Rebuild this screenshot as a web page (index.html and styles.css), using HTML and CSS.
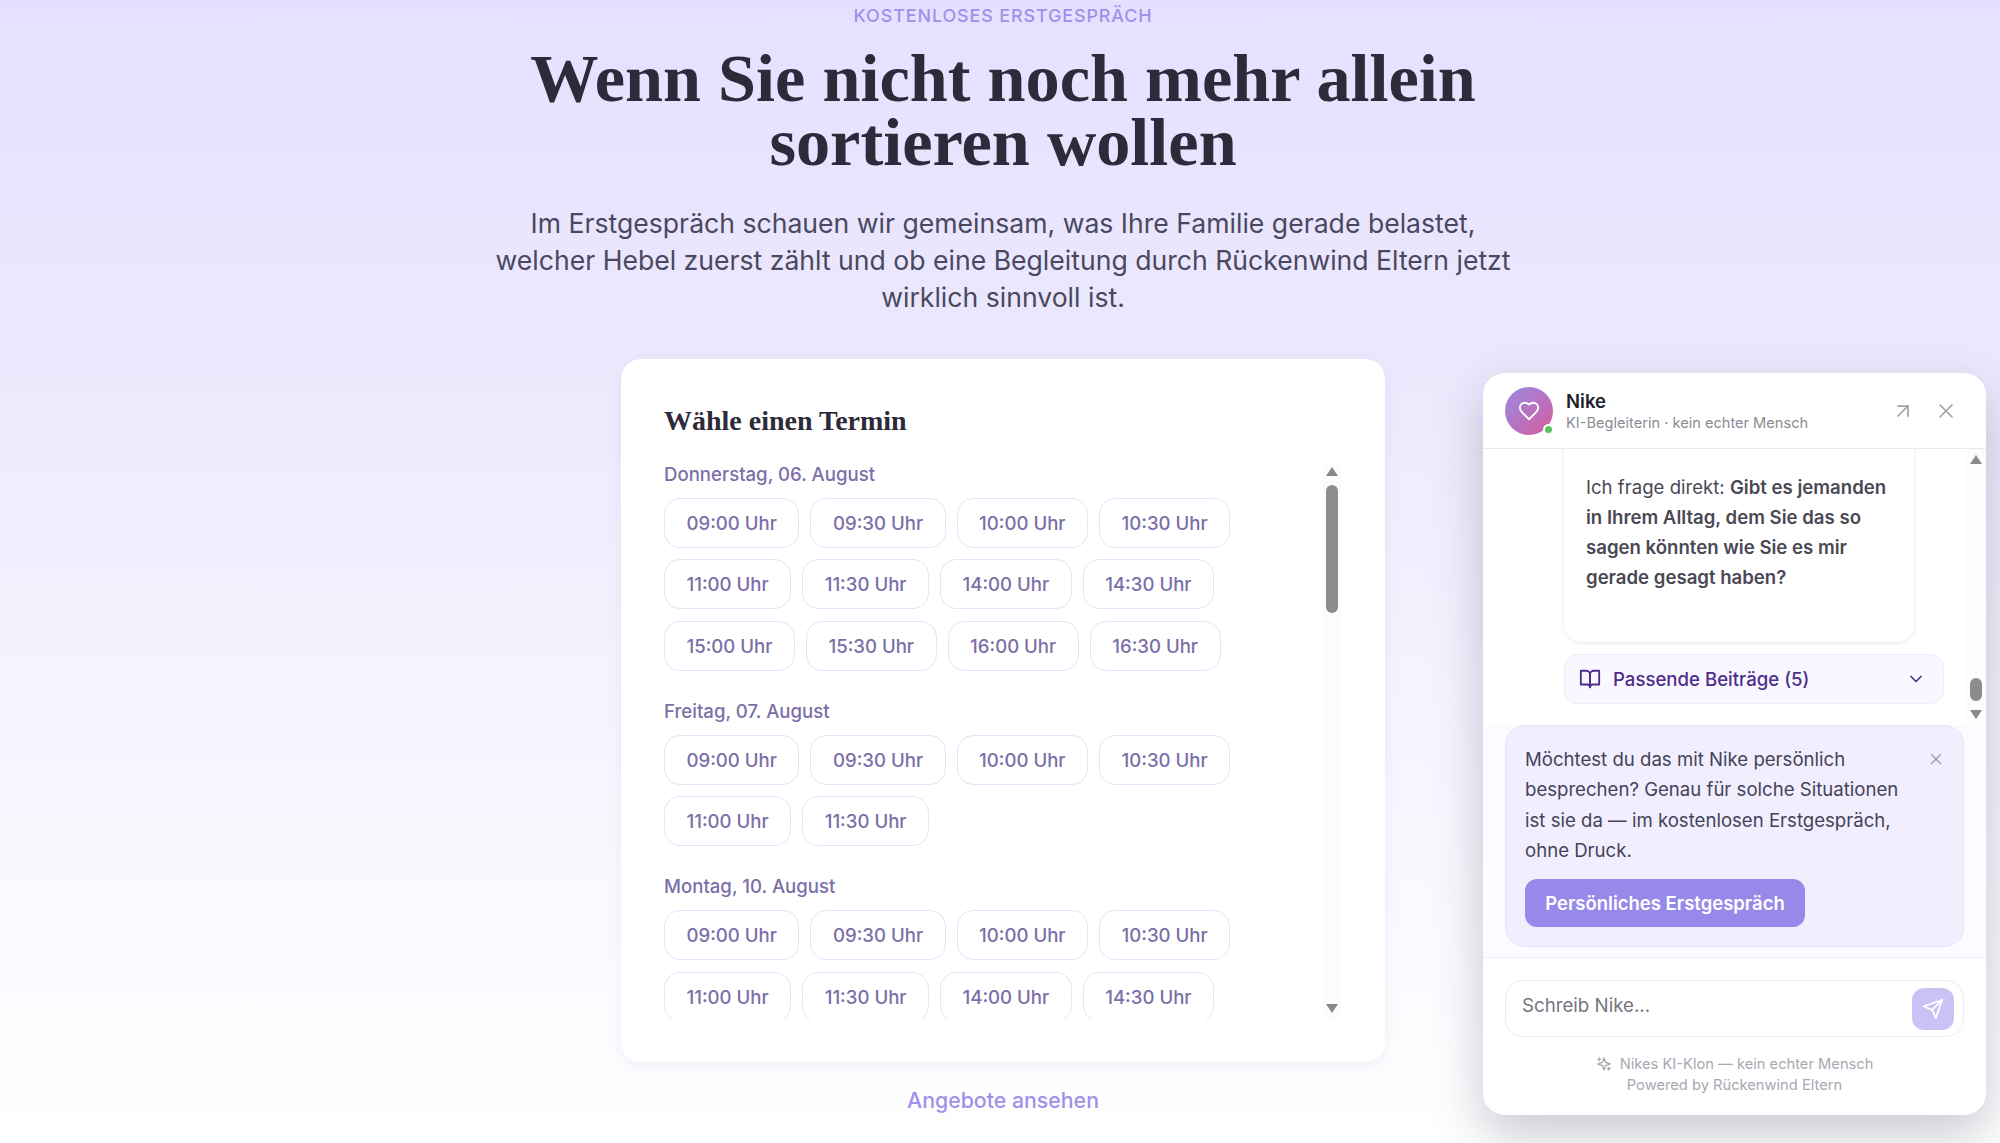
FILE: index.html
```html
<!DOCTYPE html>
<html lang="de">
<head>
  <meta charset="UTF-8" />
  <meta name="viewport" content="width=device-width, initial-scale=1.0"/>
  <title>Kostenloses Erstgespräch</title>
  <link rel="stylesheet" href="styles.css">
</head>
<body>

  <main class="page">
    <div class="eyebrow">Kostenloses Erstgespräch</div>
    <h1>Wenn Sie nicht noch mehr allein<br>sortieren wollen</h1>
    <p class="lead">Im Erstgespräch schauen wir gemeinsam, was Ihre Familie gerade belastet, welcher Hebel zuerst zählt und ob eine Begleitung durch Rückenwind Eltern jetzt wirklich sinnvoll ist.</p>

    <section class="card">
      <h2>Wähle einen Termin</h2>
      <div class="picker">
        <div class="days">
          <div class="day">
            <div class="day-label">Donnerstag, 06. August</div>
            <div class="slots">
              <button class="slot">09:00 Uhr</button>
              <button class="slot">09:30 Uhr</button>
              <button class="slot">10:00 Uhr</button>
              <button class="slot">10:30 Uhr</button>
              <button class="slot">11:00 Uhr</button>
              <button class="slot">11:30 Uhr</button>
              <button class="slot">14:00 Uhr</button>
              <button class="slot">14:30 Uhr</button>
              <button class="slot">15:00 Uhr</button>
              <button class="slot">15:30 Uhr</button>
              <button class="slot">16:00 Uhr</button>
              <button class="slot">16:30 Uhr</button>
            </div>
          </div>
          <div class="day">
            <div class="day-label">Freitag, 07. August</div>
            <div class="slots">
              <button class="slot">09:00 Uhr</button>
              <button class="slot">09:30 Uhr</button>
              <button class="slot">10:00 Uhr</button>
              <button class="slot">10:30 Uhr</button>
              <button class="slot">11:00 Uhr</button>
              <button class="slot">11:30 Uhr</button>
            </div>
          </div>
          <div class="day">
            <div class="day-label">Montag, 10. August</div>
            <div class="slots">
              <button class="slot">09:00 Uhr</button>
              <button class="slot">09:30 Uhr</button>
              <button class="slot">10:00 Uhr</button>
              <button class="slot">10:30 Uhr</button>
              <button class="slot">11:00 Uhr</button>
              <button class="slot">11:30 Uhr</button>
              <button class="slot">14:00 Uhr</button>
              <button class="slot">14:30 Uhr</button>
            </div>
          </div>
        </div>
        <div class="scrollbar picker-bar">
          <span class="arrow-up"></span>
          <span class="thumb picker-thumb"></span>
          <span class="arrow-down"></span>
        </div>
      </div>
    </section>

    <a class="offers-link" href="#">Angebote ansehen</a>
  </main>

  <aside class="chat">
    <header class="chat-head">
      <div class="avatar">
        <svg class="icon" width="22" height="22" viewBox="0 0 24 24"><path d="M19 14c1.49-1.46 3-3.21 3-5.5A5.5 5.5 0 0 0 16.5 3c-1.76 0-3 .5-4.5 2-1.5-1.5-2.74-2-4.5-2A5.5 5.5 0 0 0 2 8.5c0 2.3 1.5 4.05 3 5.5l7 7Z"/></svg>
        <span class="online"></span>
      </div>
      <div class="chat-who">
        <div class="chat-name">Nike</div>
        <div class="chat-sub">KI-Begleiterin · kein echter Mensch</div>
      </div>
      <svg class="icon head-btn" width="24" height="24" viewBox="0 0 24 24"><path d="M7 7h10v10"/><path d="M7 17 17 7"/></svg>
      <svg class="icon head-btn" width="24" height="24" viewBox="0 0 24 24"><path d="M18 6 6 18"/><path d="m6 6 12 12"/></svg>
    </header>

    <div class="chat-body">
      <div class="thread">
        <div class="messages">
          <div class="bubble">Ich frage direkt: <strong>Gibt es jemanden in Ihrem Alltag, dem Sie das so sagen könnten wie Sie es mir gerade gesagt haben?</strong></div>
          <button class="related">
            <svg class="icon" width="22" height="22" viewBox="0 0 24 24"><path d="M2 3h6a4 4 0 0 1 4 4v14a3 3 0 0 0-3-3H2z"/><path d="M22 3h-6a4 4 0 0 0-4 4v14a3 3 0 0 1 3-3h7z"/></svg>
            <span class="related-text">Passende Beiträge (5)</span>
            <svg class="icon" width="20" height="20" viewBox="0 0 24 24"><path d="m6 9 6 6 6-6"/></svg>
          </button>
        </div>
        <div class="scrollbar chat-bar">
          <span class="arrow-up"></span>
          <span class="thumb chat-thumb"></span>
          <span class="arrow-down"></span>
        </div>
      </div>

      <div class="cta">
        <svg class="icon cta-close" width="18" height="18" viewBox="0 0 24 24"><path d="M18 6 6 18"/><path d="m6 6 12 12"/></svg>
        <p>Möchtest du das mit Nike persönlich besprechen? Genau für solche Situationen ist sie da — im kostenlosen Erstgespräch, ohne Druck.</p>
        <button class="cta-btn">Persönliches Erstgespräch</button>
      </div>
    </div>

    <footer class="chat-foot">
      <div class="composer">
        <input type="text" placeholder="Schreib Nike..." />
        <button class="send">
          <svg class="icon" width="22" height="22" viewBox="0 0 24 24"><path d="m22 2-7 20-4-9-9-4Z"/><path d="M22 2 11 13"/></svg>
        </button>
      </div>
      <div class="disclaimer">
        <div><svg class="icon" width="16" height="16" viewBox="0 0 24 24"><path d="m12 3-1.912 5.813a2 2 0 0 1-1.275 1.275L3 12l5.813 1.912a2 2 0 0 1 1.275 1.275L12 21l1.912-5.813a2 2 0 0 1 1.275-1.275L21 12l-5.813-1.912a2 2 0 0 1-1.275-1.275L12 3Z"/><path d="M5 3v4"/><path d="M19 17v4"/><path d="M3 5h4"/><path d="M17 19h4"/></svg> Nikes KI-Klon — kein echter Mensch</div>
        <div>Powered by Rückenwind Eltern</div>
      </div>
    </footer>
  </aside>

</body>
</html>
```

FILE: styles.css
```css
* {
  box-sizing: border-box;
}

body {
  margin: 0;
  height: 1143px;
  overflow: hidden;
  position: relative;
  font-family: 'Inter', sans-serif;
  color: #45435a;
  background: linear-gradient(180deg, #e5e0ff 0%, #ebe8fd 30%, #f5f3fe 60%, #ffffff 100%);
}

button {
  font-family: inherit;
  cursor: pointer;
}

.icon {
  fill: none;
  stroke: currentColor;
  stroke-width: 2;
  stroke-linecap: round;
  stroke-linejoin: round;
  flex-shrink: 0;
}

.page {
  display: flex;
  flex-direction: column;
  align-items: center;
  padding: 4px 0 0 6px;
}

.eyebrow {
  font-size: 17.9px;
  line-height: 24px;
  font-weight: 500;
  letter-spacing: 0.9px;
  text-transform: uppercase;
  color: #9f90ea;
}

h1 {
  margin: 18px 0 0;
  font-family: 'Liberation Serif', serif;
  font-size: 68.3px;
  line-height: 64px;
  font-weight: 700;
  text-align: center;
  color: #2d2b3a;
}

.lead {
  margin: 31px 0 0;
  max-width: 1020px;
  font-size: 26.6px;
  line-height: 37.2px;
  text-align: center;
  color: #4a4860;
}

.card {
  width: 764px;
  height: 703px;
  margin-top: 42px;
  padding: 46px 44px 43px 43px;
  background-color: white;
  border-radius: 20px;
  box-shadow: 0 4px 16px rgba(90, 80, 160, 0.08);
}

h2 {
  margin: 0;
  font-family: 'Liberation Serif', serif;
  font-size: 28px;
  line-height: 32px;
  font-weight: 700;
  color: #2d2b3a;
}

.picker {
  display: flex;
  justify-content: space-between;
  height: 556px;
  margin-top: 26px;
}

.days {
  width: 640px;
  overflow: hidden;
}

.day {
  margin-bottom: 29px;
}

.day-label {
  margin: 0 0 13px;
  font-size: 18.6px;
  line-height: 22px;
  font-weight: 500;
  color: #7a6fa8;
}

.slots {
  display: flex;
  flex-wrap: wrap;
  gap: 11.5px 11px;
}

.slot {
  height: 50px;
  padding: 0 21.5px;
  background-color: white;
  border: 1.5px solid #e6e2fa;
  border-radius: 16px;
  font-size: 18.6px;
  font-weight: 500;
  color: #7a6fa8;
}

.scrollbar {
  display: flex;
  flex-direction: column;
  align-items: center;
  background-color: #fcfcfc;
}

.arrow-up,
.arrow-down {
  width: 0;
  height: 0;
  border-left: 6.5px solid transparent;
  border-right: 6.5px solid transparent;
}

.arrow-up {
  border-bottom: 9px solid #8a8a8a;
}

.arrow-down {
  border-top: 9px solid #8a8a8a;
}

.thumb {
  width: 12px;
  background-color: #8c8c8c;
  border-radius: 6px;
}

.picker-bar {
  width: 18px;
  padding-top: 4px;
}

.picker-thumb {
  height: 128px;
  margin: 9px 0 auto;
}

.picker-bar .arrow-down {
  margin-bottom: 6px;
}

.offers-link {
  margin-top: 25px;
  font-size: 21.3px;
  line-height: 26px;
  font-weight: 500;
  color: #a090e8;
  text-decoration: none;
}

/* chat widget sits on top of the page */
.chat {
  position: absolute;
  left: 1483px;
  top: 373px;
  width: 503px;
  height: 742px;
  display: flex;
  flex-direction: column;
  background-color: white;
  border-radius: 22px;
  overflow: hidden;
  box-shadow: 0 20px 50px rgba(60, 60, 90, 0.28);
}

.chat-head {
  display: flex;
  align-items: center;
  height: 76px;
  flex-shrink: 0;
  padding: 0 28px 0 22px;
  border-bottom: 1px solid #e9e9ee;
  color: #a2a2aa;
}

.avatar {
  position: relative;
  display: flex;
  align-items: center;
  justify-content: center;
  width: 48px;
  height: 48px;
  border-radius: 50%;
  color: white;
  background: linear-gradient(135deg, #9a8be6, #d45c9c);
}

.online {
  position: absolute;
  right: -1px;
  bottom: 0;
  width: 11px;
  height: 11px;
  border-radius: 50%;
  background-color: #5cc25f;
  border: 2px solid white;
}

.chat-who {
  flex: 1;
  margin-left: 13px;
}

.chat-name {
  font-size: 18.5px;
  line-height: 24px;
  font-weight: 600;
  color: #1f1f2e;
}

.chat-sub {
  font-size: 14.6px;
  line-height: 20px;
  color: #8b8b95;
}

.head-btn {
  stroke-width: 1.75;
}

.head-btn + .head-btn {
  margin-left: 19px;
}

.chat-body {
  flex: 1;
  display: flex;
  flex-direction: column;
  min-height: 0;
  background-color: #fcfbff;
  border-bottom: 1px solid #eeecf6;
}

.thread {
  display: flex;
  height: 276px;
  flex-shrink: 0;
  background-color: white;
}

.messages {
  flex: 1;
  display: flex;
  flex-direction: column;
  justify-content: flex-end;
  align-items: flex-start;
  overflow: hidden;
  padding: 0 0 21px 81px;
}

.bubble {
  width: 350px;
  flex-shrink: 0;
  padding: 40px 22px 50px;
  background-color: white;
  border-radius: 18px;
  box-shadow: 0 1px 4px rgba(60, 60, 90, 0.12);
  font-size: 18.6px;
  line-height: 30px;
  color: #4a4855;
}

.bubble strong {
  font-weight: 600;
}

.related {
  display: flex;
  align-items: center;
  flex-shrink: 0;
  width: 380px;
  height: 50px;
  margin-top: 12px;
  padding: 0 17px 0 14px;
  background-color: #f9f7ff;
  border: 1px solid #eeebfb;
  border-radius: 14px;
  color: #4e2d8a;
  font-size: 18.6px;
  font-weight: 500;
}

.related-text {
  flex: 1;
  margin-left: 12px;
  text-align: left;
}

.chat-bar {
  width: 20px;
  padding-top: 6px;
}

.chat-thumb {
  height: 23px;
  margin: auto 0 9px;
}

.chat-bar .arrow-down {
  margin-bottom: 6px;
}

.cta {
  position: relative;
  margin: 0 22px;
  height: 222px;
  padding: 18px 50px 0 19px;
  background-color: #f1eefe;
  border: 1px solid #e6e2fa;
  border-radius: 20px;
}

.cta p {
  margin: 0;
  font-size: 18.6px;
  line-height: 30.4px;
  color: #45435a;
}

.cta-close {
  position: absolute;
  top: 24px;
  right: 18px;
  color: #a2a2aa;
}

.cta-btn {
  display: block;
  width: 280px;
  height: 48px;
  margin-top: 13px;
  background-color: #9789ea;
  border: none;
  border-radius: 12px;
  color: white;
  font-size: 18.5px;
  font-weight: 600;
}

.chat-foot {
  flex-shrink: 0;
  height: 157px;
  padding: 22px 22px 0;
}

.composer {
  display: flex;
  align-items: center;
  height: 57px;
  padding: 0 9px 0 16px;
  border: 1px solid #ebe9f2;
  border-radius: 18px;
}

.composer input {
  flex: 1;
  min-width: 0;
  height: 100%;
  padding: 0 0 6px;
  border: none;
  outline: none;
  background: transparent;
  font-family: inherit;
  font-size: 18.7px;
}

.composer input::placeholder {
  color: #77757f;
}

.send {
  display: flex;
  align-items: center;
  justify-content: center;
  width: 42px;
  height: 42px;
  padding: 0;
  border: none;
  border-radius: 12px;
  background-color: #c9c3f5;
  color: white;
}

.disclaimer {
  margin-top: 17px;
  font-size: 14.7px;
  line-height: 21px;
  text-align: center;
  color: #a9a8b2;
}

.disclaimer .icon {
  vertical-align: -3px;
  margin-right: 4px;
}
```
